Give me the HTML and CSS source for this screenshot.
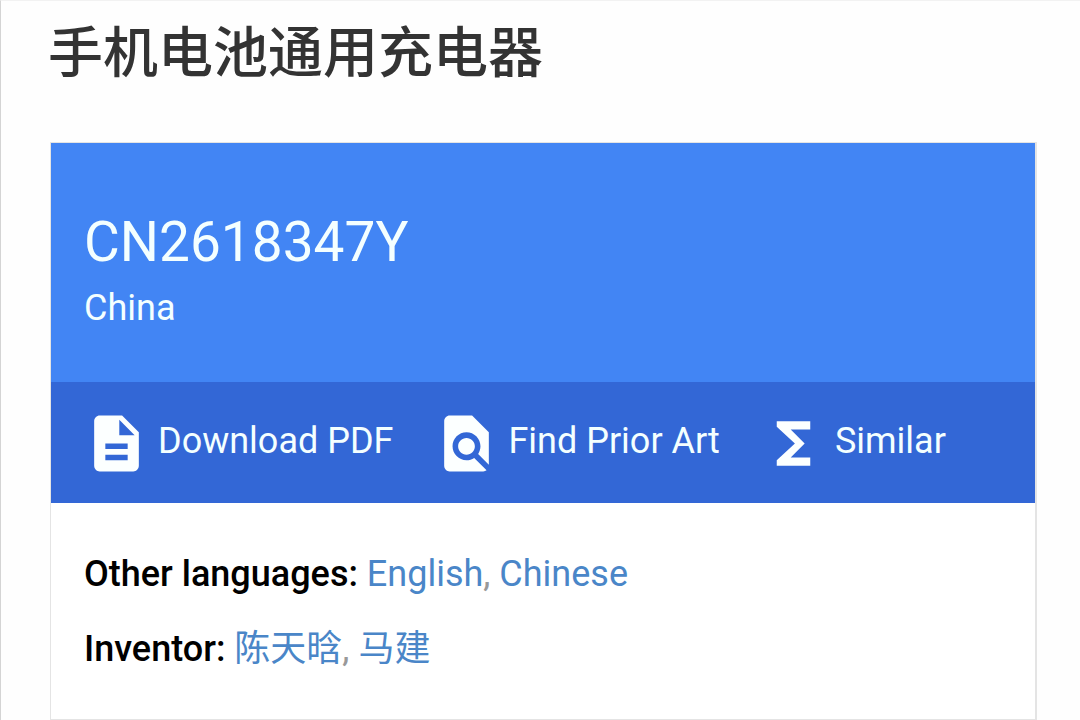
FILE: index.html
```html
<!DOCTYPE html>
<html lang="en">
<head>
<meta charset="utf-8">
<meta name="viewport" content="width=device-width, initial-scale=1">
<title>CN2618347Y</title>
<link rel="stylesheet" href="styles.css">
</head>
<body>
<main class="page">
  <h1 class="title" lang="zh-CN">手机电池通用充电器</h1>
  <section class="card">
    <header class="card-head">
      <h2 class="number">CN2618347Y</h2>
      <p class="country">China</p>
    </header>
    <nav class="actions">
      <a class="action" href="#pdf">
        <svg class="icon" viewBox="0 0 24 24" aria-hidden="true"><path d="M14 2H6c-1.100 0-2 .9-2 2v16c0 1.100.9 2 2 2h12c1.100 0 2-.9 2-2V8l-6-6zm2 16H8v-2h8v2zm0-4H8v-2h8v2zm-3-5V3.500L18.500 9H13z"/></svg>
        <span>Download PDF</span>
      </a>
      <a class="action" href="#prior-art">
        <svg class="icon" viewBox="0 0 24 24" aria-hidden="true"><path d="M20 19.590V8l-6-6H6c-1.100 0-1.990.9-1.990 2L4 20c0 1.100.89 2 1.990 2H18c.45 0 .85-.15 1.190-.4l-4.430-4.430c-.8.520-1.740.83-2.760.83-2.760 0-5-2.240-5-5s2.240-5 5-5 5 2.240 5 5c0 1.020-.31 1.960-.83 2.750L20 19.590zM9 13c0 1.660 1.340 3 3 3s3-1.340 3-3-1.340-3-3-3-3 1.340-3 3z"/></svg>
        <span>Find Prior Art</span>
      </a>
      <a class="action" href="#similar">
        <svg class="icon" viewBox="0 0 24 24" aria-hidden="true"><path d="M18 4H6v2l6.500 6L6 18v2h12v-3h-7l5-5-5-5h7z"/></svg>
        <span>Similar</span>
      </a>
    </nav>
    <div class="details">
      <p class="row"><strong class="label">Other languages:</strong> <a class="link" href="#en">English</a>, <a class="link" href="#zh">Chinese</a></p>
      <p class="row"><strong class="label">Inventor:</strong> <a class="link" href="#inventor-1" lang="zh-CN">陈天晗</a>, <a class="link" href="#inventor-2" lang="zh-CN">马建</a></p>
    </div>
  </section>
</main>
</body>
</html>
```
FILE: styles.css
```css
* {
  box-sizing: border-box;
}

body {
  margin: 0;
  background: #fefefe;
  font-family: Roboto, "Noto Sans CJK SC", sans-serif;
  font-size: 36px;
  line-height: 44px;
}

h1, h2, p {
  margin: 0;
}

.page {
  min-height: 100vh;
  padding: 12px 43px 0 49px;
  border-top: 1px solid #f2f2f2;
  border-left: 1px solid #d4d4d4;
}

.title {
  margin-bottom: 49px;
  margin-left: -2px;
  color: #333;
  font-size: 55px;
  font-weight: 500;
  line-height: 80px;
}

.card {
  border: 1px solid #e4e4e4;
  border-right-width: 2px;
  background: #fff;
}

.card-head {
  padding: 66px 33px 52px;
  background: #4285f4;
  color: #f4ffff;
}

.number {
  font-size: 55px;
  font-weight: 400;
  line-height: 66px;
}

.country {
  margin-top: 11px;
}

.actions {
  display: flex;
  flex-wrap: wrap;
  gap: 40px;
  padding: 28px 32px 26px;
  background: #3367d6;
}

.action {
  display: flex;
  align-items: center;
  gap: 8px;
  color: #f4ffff;
  text-decoration: none;
}

.action span {
  padding-bottom: 6px;
}

.icon {
  width: 67px;
  height: 67px;
  fill: #fcffff;
}

.details {
  display: flex;
  flex-direction: column;
  gap: 31px;
  padding: 49px 33px 48px;
}

.row {
  color: #999;
}

.label {
  color: #000;
  font-weight: 500;
}

.link {
  color: #4a86c8;
  text-decoration: none;
}
```
